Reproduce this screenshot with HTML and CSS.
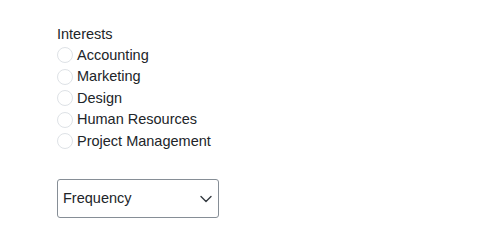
FILE: index.html
```html
<!DOCTYPE html>
<html lang="en">
<head>
  <meta charset="UTF-8" />
  <title>Interests</title>
  <link rel="stylesheet" href="styles.css">
</head>
<body>

<form class="form">
  <fieldset class="group">
    <legend class="label">Interests</legend>
    <label class="option"><input type="radio" name="interest"> Accounting</label>
    <label class="option"><input type="radio" name="interest"> Marketing</label>
    <label class="option"><input type="radio" name="interest"> Design</label>
    <label class="option"><input type="radio" name="interest"> Human Resources</label>
    <label class="option"><input type="radio" name="interest"> Project Management</label>
  </fieldset>

  <div class="select">
    <span>Frequency</span>
    <svg width="12" height="8" viewBox="0 0 12 8">
      <path d="M1 1.5l5 5 5-5" fill="none" stroke="#343a40" stroke-width="1.4" stroke-linecap="round" stroke-linejoin="round"/>
    </svg>
  </div>
</form>

</body>
</html>
```

FILE: styles.css
```css
* {
  box-sizing: border-box;
  margin: 0;
  padding: 0;
}

body {
  background: #fff;
  font-family: "Liberation Sans", Arial, sans-serif;
  font-size: 14.5px;
  line-height: 21.5px;
  color: #212529;
}

.form {
  padding: 24px 0 0 57px;
}

.group {
  border: none;
  display: flex;
  flex-direction: column;
}

.label {
  padding: 0;
  line-height: 20.5px;
}

.option {
  display: flex;
  align-items: center;
  gap: 4px;
}

.option input {
  appearance: none;
  width: 16px;
  height: 16px;
  border: 1px solid #dee2e6;
  border-radius: 50%;
  background: #fff;
}

.select {
  margin-top: 27px;
  width: 162px;
  height: 39px;
  border: 1px solid #868e96;
  border-radius: 3px;
  display: flex;
  align-items: center;
  justify-content: space-between;
  padding: 0 6px 0 5px;
}
```
